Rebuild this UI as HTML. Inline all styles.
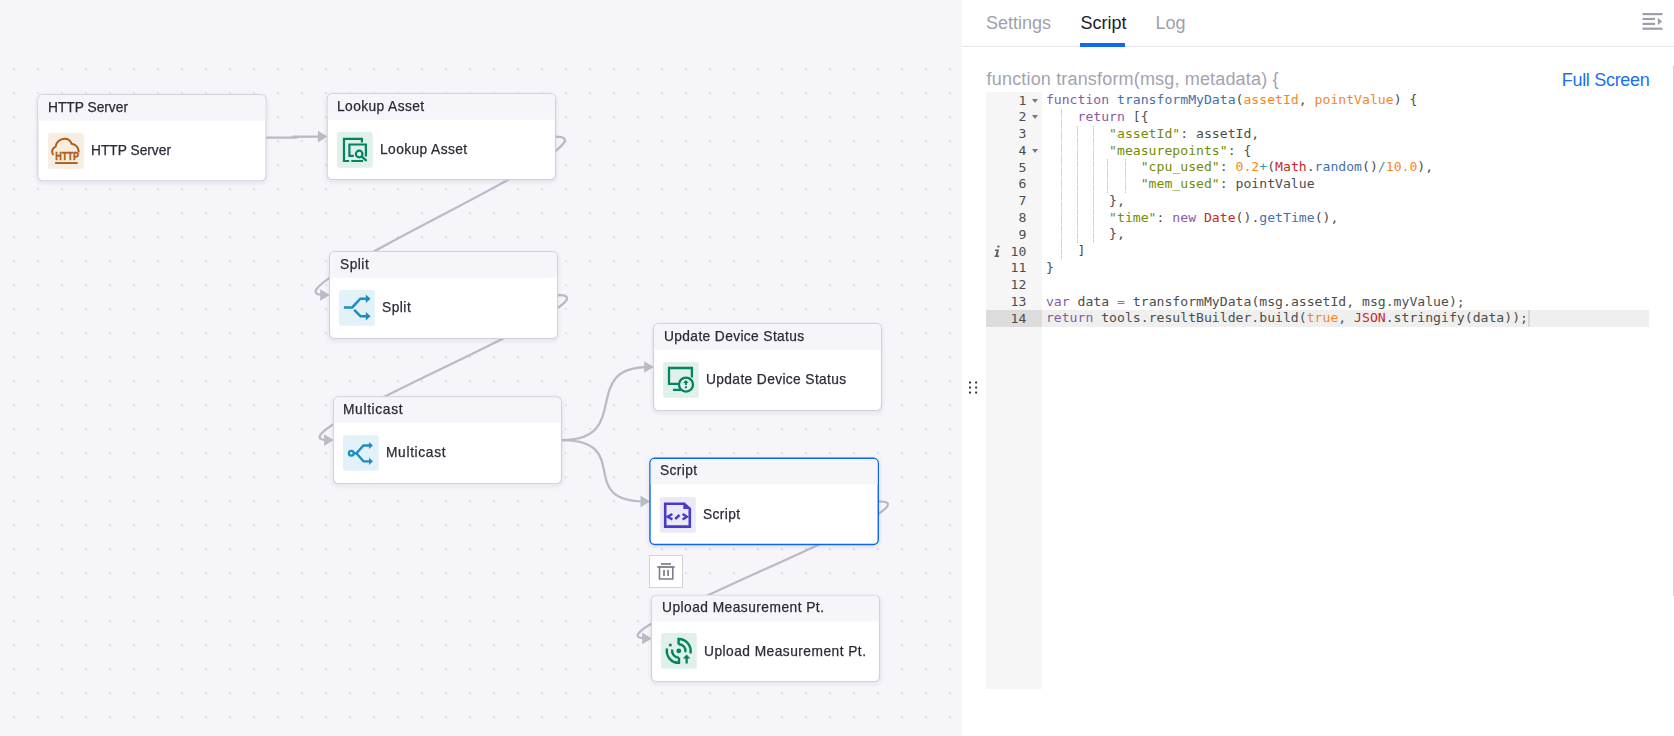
<!DOCTYPE html>
<html lang="en">
<head>
<meta charset="utf-8">
<title>Flow Designer - Script</title>
<style>
*{box-sizing:border-box;}
html,body{margin:0;padding:0;}
body{width:1674px;height:736px;overflow:hidden;position:relative;background:#f5f5fa;font-family:"Liberation Sans",Arial,sans-serif;color:#2b2b37;}
#canvas{position:absolute;left:0;top:0;width:962px;height:736px;background:#f5f5fa;overflow:hidden;}
#grid{position:absolute;left:0;top:57px;width:962px;height:679px;
  background-image:radial-gradient(circle at 12px 12px,#dddde6 0,#dddde6 0.6px,rgba(221,221,230,0) 1.6px);
  background-size:24px 24px;background-position:1.86px 0.06px;}
#links .ah{fill:#bbbbc6;stroke:none;}
#links{position:absolute;left:0;top:0;width:962px;height:736px;overflow:visible;}
.hd,.lb{position:absolute;height:20px;line-height:20px;font-size:13.75px;white-space:nowrap;will-change:transform;-webkit-text-stroke:0.25px #2b2b37;}
.ic{position:absolute;overflow:visible;}
#trash{position:absolute;left:649px;top:555px;width:34px;height:33px;background:#fff;border:1px solid #d2d2db;}
#panel{position:absolute;left:962px;top:0;width:712px;height:736px;background:#fff;}
#tabs{position:absolute;left:0;top:0;width:712px;height:47px;border-bottom:1px solid #e6e6ec;}
.tab{position:absolute;top:0;height:46px;line-height:46.8px;font-size:18px;color:#9f9fae;white-space:nowrap;}
.tab.on{color:#1c1c28;}
#ink{position:absolute;left:118px;top:43px;width:45px;height:3.8px;background:#0f69f5;}
#fnhead{position:absolute;left:24.6px;top:66.4px;height:26px;line-height:26px;font-size:18px;letter-spacing:0.17px;color:#a3a3b2;white-space:nowrap;}
#full{position:absolute;right:24.5px;top:66.6px;height:26px;line-height:26px;font-size:18px;letter-spacing:-0.3px;color:#1b6ff2;white-space:nowrap;}
#handle{position:absolute;left:969px;top:381px;width:9px;height:13px;}
#ed{position:absolute;left:24px;top:92.1px;width:663px;height:597px;overflow:hidden;font-family:"DejaVu Sans Mono","Liberation Mono",monospace;font-size:13.14px;color:#4d4d4c;}
#gut{position:absolute;left:0;top:0;width:56px;height:597px;background:#f6f6f6;}
#actg{position:absolute;left:0;width:56px;height:16.77px;background:#dcdcdc;}
#actl{position:absolute;left:56px;width:607px;height:16.77px;background:#efefef;}
.gn{position:absolute;left:0;width:40.4px;height:17px;line-height:17px;text-align:right;white-space:pre;}
.fw{position:absolute;left:45.7px;top:7px;width:0;height:0;border-left:3.3px solid transparent;border-right:3.3px solid transparent;border-top:4.2px solid #787878;}
.inf{position:absolute;left:6.1px;}
.ig{position:absolute;width:1px;background-image:linear-gradient(to bottom,#c4c4c4 50%,rgba(255,255,255,0) 50%);background-size:1px 2.2px;}
.cl{position:absolute;left:59.9px;height:17px;line-height:17px;white-space:pre;}
#cur{position:absolute;width:1.5px;height:16.77px;background:#d9d9d9;}
.k{color:#8959a8}.f{color:#4271ae}.p{color:#f5871f}.s{color:#718c00}.n{color:#f5871f}.v{color:#c82829}.o{color:#3e999f}.l{color:#f5871f}.b{color:#4d4d4c}
</style>
</head>
<body>
<div id="canvas">
  <div id="grid"></div>
  <svg id="links" width="962" height="736" viewBox="0 0 962 736">
  <defs><filter id="sh" x="-5%" y="-12%" width="110%" height="136%"><feDropShadow dx="0" dy="1.6" stdDeviation="1.9" flood-color="#3c3c5a" flood-opacity="0.11"/></filter></defs>
  <g fill="none" stroke="#bbbbc6" stroke-width="2.3">
    <path d="M266.0,137.7 C338.5,137.7 252.2,136.6 322.2,136.6"/>
    <path class="ah" d="M317.9,130.8 L327.5,136.6 L317.9,142.4 Z"/>
    <path d="M555.5,136.6 C628.0,136.6 254.5,295.0 324.5,295.0"/>
    <path class="ah" d="M320.2,289.2 L329.8,295.0 L320.2,300.8 Z"/>
    <path d="M557.6,295.0 C630.1,295.0 258.4,440.1 328.4,440.1"/>
    <path class="ah" d="M324.1,434.3 L333.7,440.1 L324.1,445.9 Z"/>
    <path d="M561.5,440.1 C634.0,440.1 578.5,367.0 648.5,367.0"/>
    <path class="ah" d="M644.2,361.2 L653.8,367.0 L644.2,372.8 Z"/>
    <path d="M561.5,440.1 C634.0,440.1 574.8,501.4 644.8,501.4"/>
    <path class="ah" d="M640.5,495.6 L650.0,501.4 L640.5,507.2 Z"/>
    <path d="M878.5,501.4 C951.0,501.4 576.5,638.4 646.5,638.4"/>
    <path class="ah" d="M642.2,632.6 L651.8,638.4 L642.2,644.2 Z"/>
  </g>
  <rect x="37.86" y="94.56" width="228.08" height="86.18" rx="4.84" fill="#fff" stroke="#d2d2dc" stroke-width="1.12" filter="url(#sh)"/><path d="M38.42,120.80 V99.40 A4.28,4.28 0 0 1 42.70,95.12 H261.10 A4.28,4.28 0 0 1 265.38,99.40 V120.80 Z" fill="#f5f5fa"/>
  <rect x="327.26" y="93.46" width="228.18" height="86.18" rx="4.84" fill="#fff" stroke="#d2d2dc" stroke-width="1.12" filter="url(#sh)"/><path d="M327.82,119.70 V98.30 A4.28,4.28 0 0 1 332.10,94.02 H550.60 A4.28,4.28 0 0 1 554.88,98.30 V119.70 Z" fill="#f5f5fa"/>
  <rect x="329.56" y="251.61" width="227.98" height="86.83" rx="4.84" fill="#fff" stroke="#d2d2dc" stroke-width="1.12" filter="url(#sh)"/><path d="M330.12,277.85 V256.45 A4.28,4.28 0 0 1 334.40,252.17 H552.70 A4.28,4.28 0 0 1 556.98,256.45 V277.85 Z" fill="#f5f5fa"/>
  <rect x="333.46" y="396.86" width="227.98" height="86.58" rx="4.84" fill="#fff" stroke="#d2d2dc" stroke-width="1.12" filter="url(#sh)"/><path d="M334.02,423.10 V401.70 A4.28,4.28 0 0 1 338.30,397.42 H556.60 A4.28,4.28 0 0 1 560.88,401.70 V423.10 Z" fill="#f5f5fa"/>
  <rect x="653.56" y="323.56" width="227.88" height="86.88" rx="4.84" fill="#fff" stroke="#d2d2dc" stroke-width="1.12" filter="url(#sh)"/><path d="M654.12,349.80 V328.40 A4.28,4.28 0 0 1 658.40,324.12 H876.60 A4.28,4.28 0 0 1 880.88,328.40 V349.80 Z" fill="#f5f5fa"/>
  <rect x="649.98" y="458.33" width="228.30" height="86.15" rx="4.68" fill="#fff" stroke="#0b66f2" stroke-width="1.45" filter="url(#sh)"/><path d="M650.70,484.40 V463.00 A3.95,3.95 0 0 1 654.65,459.05 H873.60 A3.95,3.95 0 0 1 877.55,463.00 V484.40 Z" fill="#f5f5fa"/>
  <rect x="651.56" y="595.26" width="227.88" height="86.28" rx="4.84" fill="#fff" stroke="#d2d2dc" stroke-width="1.12" filter="url(#sh)"/><path d="M652.12,621.50 V600.10 A4.28,4.28 0 0 1 656.40,595.82 H874.60 A4.28,4.28 0 0 1 878.88,600.10 V621.50 Z" fill="#f5f5fa"/>
  </svg>
  <div class="hd" style="left:47.8px;top:98px;letter-spacing:0.0px">HTTP Server</div>
  <div class="lb" style="left:90.6px;top:141px;letter-spacing:0.0px">HTTP Server</div>
  <svg class="ic" style="left:48px;top:132.9px" width="36" height="36" viewBox="0 0 36 36">
      <rect x="0" y="0" width="35.8" height="35.8" rx="2.6" fill="#f6ede3"/>
      <path d="M4.9,21.3 C3.2,18.6 4.2,15.4 7.6,13.6 C8.2,9.2 12,5.8 16.5,5.8 C20,5.8 22.6,7.8 23.6,10.8 C27.4,11.3 30.2,14.2 30.7,18.6" fill="none" stroke="#b25d12" stroke-width="2" stroke-linecap="round"/>
      <text x="19.2" y="27.2" text-anchor="middle" font-family="Liberation Sans, Arial, sans-serif" font-weight="bold" font-size="10" fill="#b25d12" stroke="#b25d12" stroke-width="0.35" textLength="23.8" lengthAdjust="spacingAndGlyphs">HTTP</text>
      <rect x="7.1" y="29.1" width="22.6" height="1.9" fill="#b25d12"/>
  </svg>
  <div class="hd" style="left:337.2px;top:97px;letter-spacing:0.42px">Lookup Asset</div>
  <div class="lb" style="left:380.0px;top:140px;letter-spacing:0.42px">Lookup Asset</div>
  <svg class="ic" style="left:337px;top:131.8px" width="36" height="36" viewBox="0 0 36 36">
      <rect x="0" y="0" width="35.8" height="35.8" rx="2.6" fill="#e0f0ea"/>
      <g fill="none" stroke="#05825f" stroke-width="2.2"><path d="M24.9,10.4 V6.8 H7 V29 H12.2 M14.3,29 H26"/>
      <path d="M16.8,23.9 H12.4 V12.5 H28.9 V24.6"/>
      <circle cx="22.2" cy="22" r="3.3"/>
      <path d="M24.8,24.6 L29.6,28.8"/></g>
  </svg>
  <div class="hd" style="left:339.5px;top:255px;letter-spacing:0.5px">Split</div>
  <div class="lb" style="left:382.3px;top:298px;letter-spacing:0.5px">Split</div>
  <svg class="ic" style="left:339px;top:290px" width="36" height="36" viewBox="0 0 36 36">
      <rect x="0" y="0" width="35.8" height="35.8" rx="2.6" fill="#e3f1f9"/>
      <g fill="none" stroke="#1d8dc2" stroke-width="2.6"><path d="M4.9,17.5 H13.2 L21.4,8.7 H27.5"/>
      <path d="M15.2,19.8 L21.6,26.3 H27.5"/>
      <path d="M26.8,4.6 L31.6,8.7 L26.8,12.9 Z M26.8,22.1 L31.6,26.3 L26.8,30.5 Z" fill="#1d8dc2" stroke="none"/></g>
  </svg>
  <div class="hd" style="left:343.4px;top:400px;letter-spacing:0.66px">Multicast</div>
  <div class="lb" style="left:386.2px;top:443px;letter-spacing:0.66px">Multicast</div>
  <svg class="ic" style="left:343px;top:435.1px" width="36" height="36" viewBox="0 0 36 36">
      <rect x="0" y="0" width="35.8" height="35.8" rx="2.6" fill="#e3f1f9"/>
      <g fill="none" stroke="#1d8dc2" stroke-width="2.3"><circle cx="8.3" cy="18.3" r="2.4"/>
      <path d="M10.8,18.3 H13.4 L20.5,10.5 H26.5"/>
      <path d="M13.4,18.3 L20.5,26.3 H26.5"/>
      <path d="M26,6.9 L29.9,10.5 L26,14.1 Z M26,22.7 L29.9,26.3 L26,29.9 Z" fill="#1d8dc2" stroke="none"/></g>
  </svg>
  <div class="hd" style="left:663.5px;top:327px;letter-spacing:0.38px">Update Device Status</div>
  <div class="lb" style="left:706.3px;top:370px;letter-spacing:0.38px">Update Device Status</div>
  <svg class="ic" style="left:663px;top:362px" width="36" height="36" viewBox="0 0 36 36">
      <rect x="0" y="0" width="35.8" height="35.8" rx="2.6" fill="#e0f0ea"/>
      <g fill="none" stroke="#05825f" stroke-width="2.3"><path d="M28.9,15.5 V6 H6 V21.8 H15.6"/>
      <path d="M10,27.9 H17.8"/>
      <circle cx="23" cy="22.6" r="7"/>
      <path d="M22.9,18 L25.7,21.1 H23.9 V23 H21.9 V21.1 H20.1 Z M21.9,24.2 H23.9 V26.2 H21.9 Z" fill="#05825f" stroke="none"/></g>
  </svg>
  <div class="hd" style="left:659.8px;top:461px;letter-spacing:0.38px">Script</div>
  <div class="lb" style="left:702.5px;top:505px;letter-spacing:0.38px">Script</div>
  <svg class="ic" style="left:660px;top:496.9px" width="36" height="36" viewBox="0 0 36 36">
      <rect x="0" y="0" width="35.8" height="35.8" rx="2.6" fill="#ebe8f7"/>
      <g fill="none" stroke="#4a3bc4" stroke-width="2.6"><path d="M24.2,6.7 H5.2 V29.6 H29.8 V11.6"/>
      <path d="M23.3,5.4 H24.7 L31.1,11.2 V11.9 H23.3 Z" fill="#4a3bc4" stroke="none"/>
      <path d="M12.4,17 L7.6,19.7 L12.4,22.4 M15.2,22 L19.5,18 M22.6,17 L26.8,19.7 L22.6,22.4" stroke-width="2.4"/></g>
  </svg>
  <div class="hd" style="left:661.5px;top:598px;letter-spacing:0.47px">Upload Measurement Pt.</div>
  <div class="lb" style="left:704.3px;top:642px;letter-spacing:0.47px">Upload Measurement Pt.</div>
  <svg class="ic" style="left:661px;top:633.4px" width="36" height="36" viewBox="0 0 36 36">
      <rect x="0" y="0" width="35.8" height="35.8" rx="2.6" fill="#e0f0ea"/>
      <g fill="none" stroke="#05825f" stroke-width="2.4"><path d="M17.6,11.4 V6 A12,12 0 0 1 29.4,20.6"/>
      <path d="M17.6,11.2 A6.7,6.7 0 0 1 24.4,19.2"/>
      <path d="M18,24.6 V29.9 A12,12 0 0 1 6,15.6"/>
      <path d="M18,24.6 A6.7,6.7 0 0 1 11.2,16.6"/>
      <circle cx="17.8" cy="17.9" r="2.4" fill="#05825f" stroke="none"/>
      <circle cx="9.3" cy="12" r="1.5" fill="#05825f" stroke="none"/>
      <path d="M25.6,21.4 L29.4,25.4 H26.8 V30.4 H24.5 V25.4 H21.8 Z" fill="#05825f" stroke="none"/></g>
  </svg>
  <div id="trash"><svg width="34" height="33" viewBox="0 0 34 33" style="position:absolute;left:-1px;top:-1px" fill="none" stroke="#7c7c8a">
      <path d="M12,9 H22" stroke-width="1.7"/>
      <path d="M8.3,12 H25.6" stroke-width="1.8"/>
      <path d="M10.5,12.5 V24 H23.8 V12.5" stroke-width="1.6"/>
      <path d="M15,15 V21 M19.1,15 V21" stroke-width="1.7"/>
  </svg></div>
</div>
<div id="panel">
  <div id="tabs">
    <div class="tab" style="left:24px">Settings</div>
    <div class="tab on" style="left:118.4px">Script</div>
    <div class="tab" style="left:193.4px">Log</div>
    <div id="ink"></div>
  </div>
  <div id="fnhead">function transform(msg, metadata) {</div>
  <div id="full">Full Screen</div>
  <div id="ed">
  <div id="gut"></div>
  <div id="actg" style="top:218.11px"></div><div id="actl" style="top:218.11px"></div>
  <div class="gn" style="top:-0.10px">1<i class="fw"></i></div>
  <div class="gn" style="top:15.90px">2<i class="fw"></i></div>
  <div class="gn" style="top:32.90px">3</div>
  <div class="gn" style="top:49.90px">4<i class="fw"></i></div>
  <div class="gn" style="top:66.90px">5</div>
  <div class="gn" style="top:82.90px">6</div>
  <div class="gn" style="top:99.90px">7</div>
  <div class="gn" style="top:116.90px">8</div>
  <div class="gn" style="top:133.90px">9</div>
  <div class="gn" style="top:150.90px">10</div>
  <div class="gn" style="top:166.90px">11</div>
  <div class="gn" style="top:183.90px">12</div>
  <div class="gn" style="top:200.90px">13</div>
  <div class="gn" style="top:217.90px">14</div>
  <svg class="inf" style="top:150.93px" width="10" height="17" viewBox="0 0 10 17"><g fill="#5e5e5e"><rect x="5.3" y="2.4" width="2.2" height="2.2" rx="0.7"/><path d="M3.2,6.6 H7 L5.6,12.6 H7.2 L6.9,14 H2.4 L2.7,12.6 H3.6 L4.7,8 H2.9 Z"/></g></svg>
  <div class="ig" style="left:75.32px;top:16.77px;height:150.93px"></div>
  <div class="ig" style="left:91.14px;top:33.54px;height:117.39px"></div>
  <div class="ig" style="left:106.96px;top:33.54px;height:117.39px"></div>
  <div class="ig" style="left:121.20px;top:67.08px;height:33.54px"></div>
  <div class="ig" style="left:138.60px;top:67.08px;height:33.54px"></div>
  <div class="cl" style="top:-1.10px"><span class="k">function</span> <span class="f">transformMyData</span><span class="b">(</span><span class="p">assetId</span>, <span class="p">pointValue</span><span class="b">)</span> <span class="b">{</span></div>
  <div class="cl" style="top:15.90px">    <span class="k">return</span> <span class="b">[{</span></div>
  <div class="cl" style="top:32.90px">        <span class="s">"assetId"</span>: assetId,</div>
  <div class="cl" style="top:49.90px">        <span class="s">"measurepoints"</span>: <span class="b">{</span></div>
  <div class="cl" style="top:65.90px">            <span class="s">"cpu_used"</span>: <span class="n">0.2</span><span class="o">+</span><span class="b">(</span><span class="v">Math</span>.<span class="f">random</span><span class="b">()</span><span class="o">/</span><span class="n">10.0</span><span class="b">)</span>,</div>
  <div class="cl" style="top:82.90px">            <span class="s">"mem_used"</span>: pointValue</div>
  <div class="cl" style="top:99.90px">        <span class="b">}</span>,</div>
  <div class="cl" style="top:116.90px">        <span class="s">"time"</span>: <span class="k">new</span> <span class="v">Date</span><span class="b">()</span>.<span class="f">getTime</span><span class="b">()</span>,</div>
  <div class="cl" style="top:132.90px">        <span class="b">}</span>,</div>
  <div class="cl" style="top:149.90px">    <span class="b">]</span></div>
  <div class="cl" style="top:166.90px"><span class="b">}</span></div>
  <div class="cl" style="top:183.90px"></div>
  <div class="cl" style="top:200.90px"><span class="k">var</span> data <span class="o">=</span> transformMyData<span class="b">(</span>msg.assetId, msg.myValue<span class="b">)</span>;</div>
  <div class="cl" style="top:216.90px"><span class="k">return</span> tools.resultBuilder.build<span class="b">(</span><span class="l">true</span>, <span class="v">JSON</span>.stringify<span class="b">(</span>data<span class="b">))</span>;</div>
  <div id="cur" style="left:542.41px;top:218.11px"></div>
  </div>
</div>
<svg id="handle" width="9" height="13" viewBox="0 0 9 13"><g fill="#2f2f3a">
<rect x="0" y="0.6" width="2" height="2" rx="0.5"/><rect x="6.1" y="0.6" width="2" height="2" rx="0.5"/>
<rect x="0" y="5.5" width="2" height="2" rx="0.5"/><rect x="6.1" y="5.5" width="2" height="2" rx="0.5"/>
<rect x="0" y="10.4" width="2" height="2" rx="0.5"/><rect x="6.1" y="10.4" width="2" height="2" rx="0.5"/></g></svg>
<svg style="position:absolute;left:1642px;top:12px" width="22" height="19" viewBox="0 0 22 19"><g fill="#9f9da9">
<rect x="0.5" y="1" width="19.9" height="2.2"/><rect x="0.5" y="5.9" width="12.5" height="2.1"/>
<rect x="0.5" y="10.8" width="12.5" height="2.2"/><rect x="0.5" y="15.6" width="19.9" height="2.2"/>
<path d="M15.8,5.75 L20.2,9.4 L15.8,13.1 Z"/></g></svg>
<div style="position:absolute;left:1673px;top:66px;width:1px;height:530px;background:#cfcfcf"></div>
</body>
</html>
